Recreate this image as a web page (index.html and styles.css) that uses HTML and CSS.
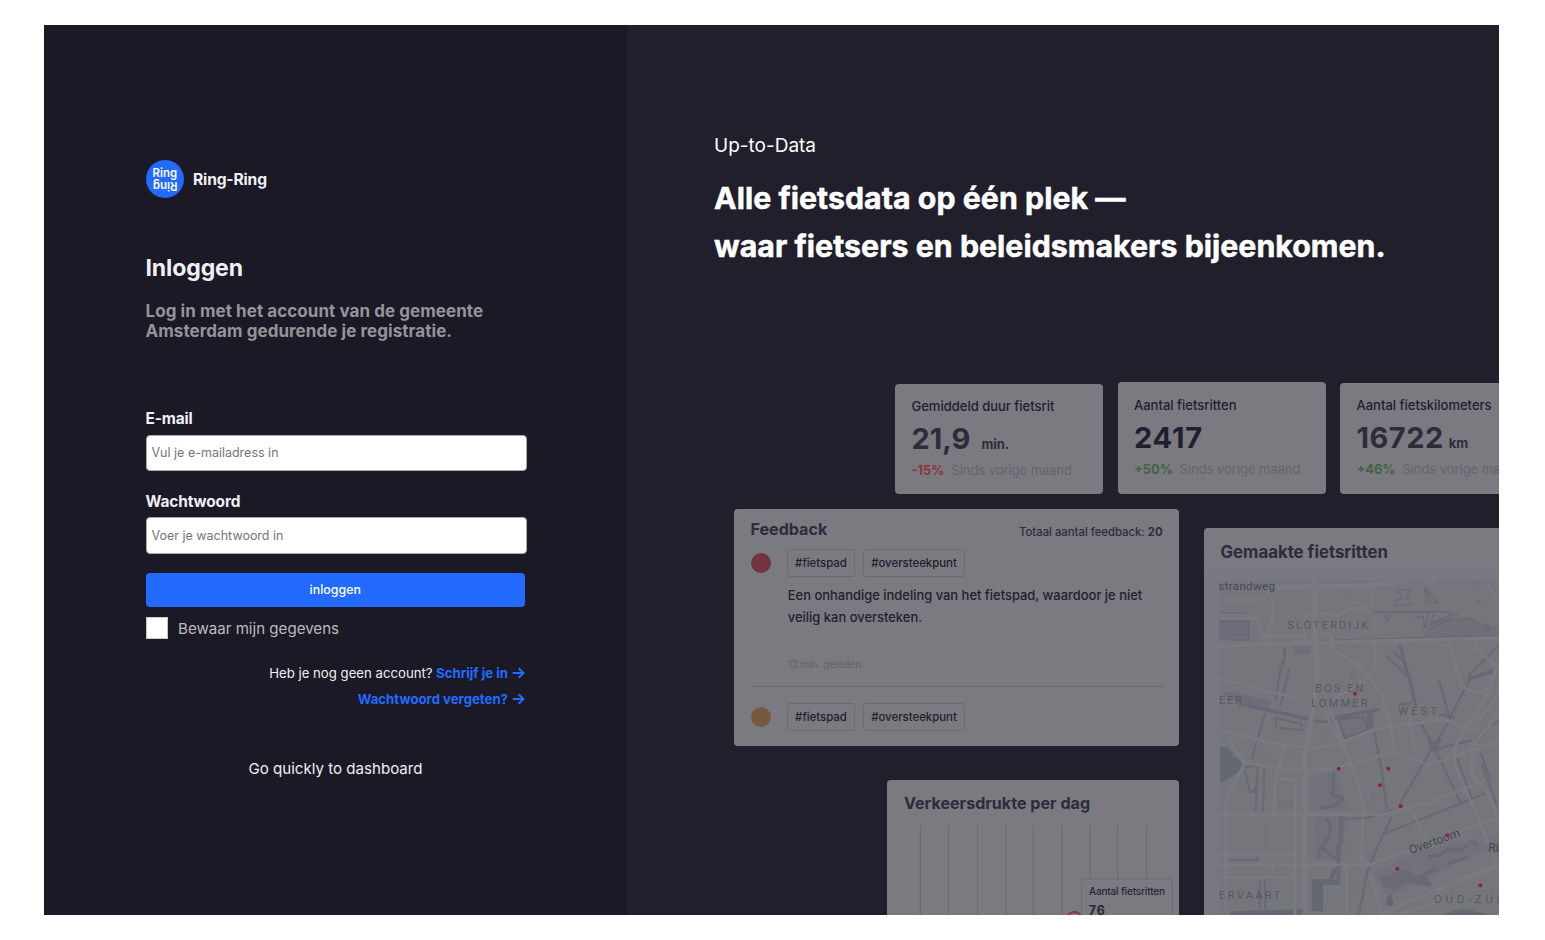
FILE: index.html
```html
<!DOCTYPE html>
<html lang="nl">
<head>
<meta charset="utf-8">
<title>Ring-Ring – Inloggen</title>
<link rel="stylesheet" href="styles.css">
</head>
<body>
<main class="page">
  <section class="login">
    <div class="brand">
      <svg class="logo" viewBox="0 0 38 38">
        <circle cx="19" cy="19" r="19" fill="#236aff"/>
        <g fill="#fff" font-family="Inter, sans-serif" font-size="12" font-weight="600">
          <text x="6.6" y="17.2" textLength="24.5" lengthAdjust="spacingAndGlyphs">Ring</text>
          <text x="6.6" y="17.2" textLength="24.5" lengthAdjust="spacingAndGlyphs" transform="rotate(180 19 19.4)">Ring</text>
        </g>
      </svg>
      <span class="brand-name">Ring-Ring</span>
    </div>
    <h1 class="title">Inloggen</h1>
    <p class="intro">Log in met het account van de gemeente<br>Amsterdam gedurende je registratie.</p>
    <form class="form">
      <label class="label" for="email">E-mail</label>
      <input class="input" id="email" type="text" placeholder="Vul je e-mailadress in">
      <label class="label second" for="pass">Wachtwoord</label>
      <input class="input" id="pass" type="password" placeholder="Voer je wachtwoord in">
      <button class="submit" type="button">inloggen</button>
      <label class="remember"><span class="box"></span><span class="remember-text">Bewaar mijn gegevens</span></label>
    </form>
    <div class="links">
      <div class="link-row"><span class="ask">Heb je nog geen account?</span><a class="link signup">Schrijf je in</a><svg class="arrow" viewBox="0 0 13 12"><path d="M.7 6H11.5M6.7 1.2 11.5 6 6.7 10.8"/></svg></div>
      <div class="link-row"><a class="link forgot">Wachtwoord vergeten?</a><svg class="arrow" viewBox="0 0 13 12"><path d="M.7 6H11.5M6.7 1.2 11.5 6 6.7 10.8"/></svg></div>
    </div>
    <a class="quick">Go quickly to dashboard</a>
  </section>

  <section class="promo">
    <header class="headline">
      <p class="kicker">Up-to-Data</p>
      <h2 class="slogan">Alle fietsdata op één plek —<br>waar fietsers en beleidsmakers bijeenkomen.</h2>
    </header>
    <div class="stats">
      <article class="card stat first">
        <p class="stat-label">Gemiddeld duur fietsrit</p>
        <p class="stat-value">21,9<small class="wide">min.</small></p>
        <p class="stat-trend"><b class="down">-15%</b><span>Sinds vorige maand</span></p>
      </article>
      <article class="card stat mid">
        <p class="stat-label">Aantal fietsritten</p>
        <p class="stat-value dark">2417</p>
        <p class="stat-trend"><b class="up">+50%</b><span>Sinds vorige maand</span></p>
      </article>
      <article class="card stat last">
        <p class="stat-label">Aantal fietskilometers</p>
        <p class="stat-value distance">16722<small>km</small></p>
        <p class="stat-trend"><b class="up">+46%</b><span>Sinds vorige maand</span></p>
      </article>
    </div>
    <div class="boards">
      <div class="column">
        <article class="card feedback">
          <div class="fb-head"><h3 class="card-title">Feedback</h3><span class="total">Totaal aantal feedback: <b>20</b></span></div>
          <div class="fb-tags"><i class="dot red"></i><span class="tag t1">#fietspad</span><span class="tag t2">#oversteekpunt</span></div>
          <p class="fb-text">Een onhandige indeling van het fietspad, waardoor je niet<br>veilig kan oversteken.</p>
          <p class="fb-time">12 min. geleden</p>
          <hr class="rule">
          <div class="fb-tags"><i class="dot orange"></i><span class="tag t1">#fietspad</span><span class="tag t2">#oversteekpunt</span></div>
        </article>
        <article class="card traffic">
          <h3 class="card-title">Verkeersdrukte per dag</h3>
          <svg class="chart" viewBox="887 825 292 90">
            <path d="M920.3 825v90M948.6 825v90M977.5 825v90M1006.2 825v90M1033.4 825v90M1062 825v90M1090 825v90M1117.7 825v90M1146.6 825v90" stroke="#696a72" fill="none"/>
            <circle cx="1074.5" cy="919.5" r="7.5" fill="none" stroke="#972f40" stroke-width="1.8"/>
            <rect x="1081.5" y="879" width="91" height="60" rx="3" fill="#7a7a80" stroke="#6a6b73"/>
            <g font-family="Inter, sans-serif" fill="#27263a">
              <text x="1089" y="895" font-size="10" font-weight="500" textLength="76">Aantal fietsritten</text>
              <text x="1088.8" y="914.8" font-size="12.5" font-weight="700" textLength="16">76</text>
            </g>
          </svg>
        </article>
      </div>
      <article class="card rides">
        <h3 class="card-title">Gemaakte fietsritten</h3>
        <svg class="map" viewBox="72 180 840 1005">
          <rect x="72" y="180" width="840" height="1005" fill="#75767c"/>
          <!-- waterways and parks, northern half -->
          <g fill="none" stroke="#686974" stroke-width="5">
            <path d="M72 303H162V360H72Z" fill="#6d6e79" stroke="none"/>
            <path d="M72 303H162V360H112" stroke-width="4"/>
            <path d="M72 278H152" stroke-width="4"/>
            <path d="M536 276H690L740 274 790 286M565 280 577 302 585 284M657 294 686 290V324L752 296M700 280 690 320M716 282 708 310 770 284" stroke-width="4"/>
            <path d="M690 335 760 296 830 297 912 325V350L690 352Z" fill="#6f707a" stroke="none"/>
            <path d="M780 300 830 294 850 308M700 330 775 290M868 322 884 322 876 332Z"/>
            <path d="M370 362 560 356 690 352 912 346" stroke-width="4"/>
            <path d="M600 240 620 238 612 210 650 212 634 230 648 254 602 256ZM688 204 730 248 694 252ZM694 214 708 250" stroke-width="3.5"/>
            <path d="M268 384V414L260 438" stroke-width="9"/>
            <path d="M258 440 240 545M282 446 256 560" stroke-width="6"/>
            <path d="M298 378H348V404H298Z" fill="#6e6f79" stroke="none"/>
            <path d="M615 374 628 430 645 480 662 560" stroke-width="10"/>
            <path d="M572 406 642 474M596 398 636 432" stroke-width="6"/>
            <path d="M732 480 764 594 820 485M820 485 825 462 912 376" stroke-width="7"/>
            <path d="M820 478 895 452" stroke-width="11"/>
            <path d="M732 582 780 594 M610 554 650 550" stroke-width="7"/>
            <path d="M72 515 130 520 230 545 215 570 140 553" fill="#6c6d78" stroke="none"/>
            <path d="M130 553 350 598" stroke-width="9"/>
            <path d="M420 592 554 568M525 570 530 600" stroke-width="9"/>
            <path d="M470 452V470M840 186V198M843 248 860 242" stroke-width="8" opacity=".5"/>
          </g>
          <g transform="translate(0 570)">
            <g fill="#70717b">
              <path d="M346 210 400 185 425 190 455 300H345ZM355 314H455V330L436 450H358Z"/>
              <path d="M530 490 690 420 850 385 880 412 700 505 580 560Z"/>
              <path d="M432 28 505 20 520 60 450 84Z" stroke="#666772" stroke-width="6"/>
              <path d="M880 385 912 375V430L885 425Z"/>
            </g>
            <g fill="#656872">
              <path d="M76 112 95 110 142 160 145 175 76 222ZM350 508H436V524H384V604H350ZM106 604 330 598V615H106ZM740 615 800 596 870 610V615Z"/>
              <path d="M556 500 640 478 660 500 720 470 735 480 690 496 715 530 635 520 600 540 562 528Z" fill="#696a76"/>
              <path d="M584 550Q606 584 584 590 564 584 584 550" fill="#656672"/>
            </g>
            <g fill="none" stroke="#686974" stroke-width="6">
              <path d="M150 -17 350 30Q395 43 430 23L550 -2" stroke-width="9"/>
              <path d="M210 8 170 148M188 166 182 305M208 166 204 305M150 170 180 168 M150 180 165 245H180V228"/>
              <path d="M242 20V50M250 54 320 60V42L245 24"/>
              <path d="M525 10V55" stroke-width="20"/>
              <path d="M538 66 560 180 576 300" stroke-width="7"/>
              <path d="M762 32 716 110 672 30M716 110 800 285M716 120 830 90M716 105 610 290M450 328 520 322 600 300M590 320 525 460M520 470 492 612" stroke-width="7"/>
              <path d="M700 84 718 115 736 84" stroke-width="14"/>
              <path d="M570 370 700 320 870 250M780 128 832 268M826 110 868 72M858 130 885 205M860 160 905 285M868 52 912 35"/>
              <path d="M415 185V240Q400 260 432 260T410 292H380V300M392 326Q420 360 395 390T372 440M375 408 420 445" stroke-width="9"/>
              <path d="M438 318V400M430 400V515M420 475 408 510" stroke-width="13"/>
              <path d="M100 450H188V436M194 510V598M210 510V598"/>
              <path d="M700 440 735 435 760 418 800 420 830 396 850 405M760 462 820 440" stroke-width="9"/>
            </g>
            <g fill="#707179"><path d="M208 355H219V410H208ZM248 270H262V294H248ZM266 268H280V292H266ZM284 268H298V292H284ZM528 245H540V280H528ZM374 72H388V84H374Z"/></g>
          </g>
          <!-- streets -->
          <g fill="none" stroke="#7a7b81" stroke-width="8">
            <path d="M240 202 530 196 640 182M360 180V370Q372 420 364 510L330 700V1185" stroke-width="14"/>
            <path d="M72 378 360 368 912 354" stroke-width="11"/>
            <path d="M72 240H200L232 210M232 225 236 280 210 366M72 295H190L200 348H330V290L365 278 430 286 470 266 530 262 536 190M298 350V364"/>
            <path d="M378 340 408 350 418 390 480 430 520 470 560 520 580 600M540 362V440L510 482 410 540M72 475 200 510 350 545M762 364 800 500 850 520 880 505M842 360V385L905 440 880 515 840 600M912 430V520L850 600M880 190 912 250M720 184 700 190M385 570 480 750M580 580 600 694"/>
            <path d="M540 284 536 320 560 350H600" stroke-width="4"/>
            <path d="M72 630 230 668Q350 695 430 670L540 628 740 598 845 632" stroke-width="9"/>
            <path d="M150 728 270 750 400 750 600 695 700 735 912 665M95 650 150 728 92 840V1185M300 880V1185M72 884H560L700 850 870 780M405 570 490 790 505 860 500 1020 525 1034 912 892M72 1034H525M72 1004H300M72 1072H300M455 1034V1185M235 1034 230 1070M270 680 240 780 238 884M245 774 300 780V880"/>
            <path d="M850 570 780 680V740L840 870 912 1050M912 580 830 680V760L880 820 912 900M525 1060 560 1185M560 1185 700 1120 912 1030M650 870 696 964M640 570 658 690"/>
            <path d="M720 1130 740 1100 912 1040M600 1185 730 1145"/>
          </g>
          <g fill="none" stroke="#787980" stroke-width="3" opacity=".8">
            <path d="M100 410H340M120 440 230 470M400 440 510 450M420 210V250M470 205V250M300 215V260M330 215V250M395 390V480M560 400 570 460M690 390 720 560M740 380 790 560M110 710H310M110 930H310M110 960H310M130 1130H300M470 900V1010M480 1080V1180M560 700 590 840M610 700 650 820M640 860 740 830M740 900 830 980M620 960 820 880M590 1160 880 1060M780 610 730 680M480 800 560 780M120 860H280"/>
          </g>
          <g font-family="Roboto, sans-serif" font-size="34" fill="#575861">
            <text x="70" y="209" textLength="170" font-size="35" fill="#484954">strandweg</text>
            <text x="277" y="327" textLength="243">SLOTERDIJK</text>
            <text x="360" y="517" textLength="145">BOS EN</text>
            <text x="348" y="560" textLength="170">LOMMER</text>
            <text x="610" y="584" textLength="116">WEST</text>
            <text x="72" y="553" textLength="69">EER</text>
            <text x="72" y="1136" textLength="184">ERVAART</text>
            <text x="717" y="1149" textLength="197">OUD-ZUI</text>
            <text x="647" y="1003" font-size="36" textLength="160" transform="rotate(-20 647 1003)" fill="#444550">Overtoom</text>
            <text x="880" y="996" font-size="36" fill="#444550">Ri</text>
          </g>
          <g fill="#8b2737">
            <circle cx="480" cy="521" r="6"/><circle cx="431" cy="746" r="6"/><circle cx="580" cy="746" r="6"/><circle cx="555" cy="796" r="6"/><circle cx="617" cy="859" r="6"/><circle cx="757" cy="946" r="6"/><circle cx="607" cy="1046" r="6"/><circle cx="856" cy="1096" r="6"/>
          </g>
        </svg>
      </article>
    </div>
  </section>
</main>
</body>
</html>
```
FILE: styles.css
```css
* { box-sizing: border-box; }
body { margin: 0; padding: 25px 46px 25px 44px; background: #fff; font-family: Inter, "Liberation Sans", sans-serif; }
p, h1, h2, h3 { margin: 0; }
.page { display: grid; grid-template-columns: 583px 872px; height: 890px; overflow: hidden; }
.login { background: #1a1925; color: #f0f0f2; padding: 135px 0 0 101.5px; }
.brand { display: flex; align-items: center; gap: 9.5px; height: 38px; }
.logo { width: 38px; height: 38px; }
.brand-name { font-size: 15.6px; font-weight: 700; letter-spacing: -.17px; }
.title { margin-top: 54px; font-size: 23px; line-height: 32px; font-weight: 700; letter-spacing: -.1px; }
.intro { margin-top: 17px; font-size: 17px; line-height: 20px; font-weight: 700; letter-spacing: .06px; color: #949499; white-space: nowrap; }
.form { display: flex; flex-direction: column; align-items: flex-start; margin-top: 68px; }
.label { font-size: 15.4px; line-height: 20px; font-weight: 700; letter-spacing: -.12px; }
.label.second { margin-top: 20.5px; }
.input { width: 381px; height: 36.5px; margin-top: 5.5px; padding: 0 5px; border: 1px solid #a9a9ae; border-radius: 4px; background: #fff; font: 400 12.5px Inter, sans-serif; }
.input::placeholder { color: #757575; }
.submit { width: 379.5px; height: 34.5px; margin-top: 19px; border: 0; border-radius: 4px; background: #236aff; color: #fff; font: 500 12.4px Inter, sans-serif; }
.remember { display: flex; align-items: center; gap: 10px; margin-top: 9px; height: 24px; font-size: 15.1px; color: #bcbcbf; }
.box { width: 22.5px; height: 22.5px; background: #fff; border: 1px solid #c8c8c8; }
.links { width: 379.5px; margin-top: 20.5px; }
.link-row { display: flex; justify-content: flex-end; align-items: center; height: 25.5px; font-size: 13.2px; white-space: nowrap; }
.link { color: #236aff; font-weight: 700; }
.signup { margin-left: 3.5px; }
.arrow { width: 13px; height: 12px; margin-left: 4px; fill: none; stroke: #236aff; stroke-width: 2; }
.quick { display: block; width: 380px; margin-top: 46.5px; text-align: center; font-size: 15.1px; line-height: 22px; }
.promo { background: #201f2b; overflow: hidden; }
.headline { height: 357px; padding: 108px 0 0 87px; color: #fff; white-space: nowrap; }
.kicker { font-size: 19px; line-height: 25px; }
.slogan { margin-top: 17px; font-size: 30.3px; line-height: 47.5px; font-weight: 700; letter-spacing: .03px; -webkit-text-stroke: .5px #fff; }
.card { background: #7a7a80; border-radius: 4px; color: #2d2c3b; }
.stats { display: flex; align-items: flex-end; gap: 14.5px; height: 112px; padding-left: 268px; }
.stat { flex: none; width: 208px; padding: 14px 16.5px 0; white-space: nowrap; }
.first { height: 110.5px; }
.mid { height: 112.5px; padding-top: 15px; }
.last { height: 111.5px; }
.stat-label { font-size: 13px; line-height: 16px; font-weight: 500; color: #201f2f; }
.stat-value { height: 35px; margin-top: 5px; font-size: 29px; line-height: 39px; font-weight: 700; }
.stat-value.dark { color: #201f2f; letter-spacing: .8px; }
.stat-value.distance { letter-spacing: .5px; }
.stat-value small { margin-left: 5px; font-size: 13px; font-weight: 700; letter-spacing: 0; }
.stat-value small.wide { margin-left: 11px; }
.stat-trend { display: flex; gap: 7px; margin-top: 9.5px; font-size: 12.9px; line-height: 16px; color: #65656e; }
.down { color: #8e3441; }
.up { color: #416249; }
.boards { display: flex; gap: 25px; padding: 15px 0 0 107px; }
.column { flex: none; display: flex; flex-direction: column; align-items: flex-end; gap: 34.5px; width: 445px; }
.card-title { font-size: 16.1px; line-height: 22px; font-weight: 700; }
.feedback { width: 445px; height: 236.5px; padding: 8.5px 16.5px 0; }
.fb-head { display: flex; justify-content: space-between; align-items: flex-start; height: 31.5px; }
.total { margin-top: 4px; font-size: 11.3px; line-height: 20px; font-weight: 500; }
.fb-tags { display: flex; align-items: center; height: 27.5px; }
.dot { width: 20px; height: 20px; margin-right: 16.5px; border-radius: 50%; }
.red { background: #74343f; }
.orange { background: #77593f; }
.tag { height: 27.5px; border: 1px solid #6b6c72; border-radius: 3px; font-size: 11.4px; line-height: 26px; font-weight: 500; text-align: center; color: #201f2f; }
.t1 { width: 68px; margin-right: 8px; }
.t2 { width: 102px; }
.fb-text { margin: 7.5px 0 0 37.3px; font-size: 12.95px; line-height: 22px; font-weight: 500; color: #201f2f; white-space: nowrap; }
.fb-time { margin: 27.5px 0 0 37.3px; font-size: 9.9px; line-height: 16px; font-weight: 500; color: #65656c; }
.rule { height: 1px; margin: 14px 0 16.5px; border: 0; background: #686970; }
.traffic { width: 292px; height: 135px; padding-top: 11.5px; overflow: hidden; border-radius: 4px 4px 0 0; }
.traffic .card-title { margin-left: 17px; }
.chart { display: block; width: 292px; height: 90px; margin-top: 11.5px; }
.rides { flex: none; width: 296px; height: 387px; margin-top: 19px; padding-top: 12.5px; border-radius: 4px 0 0 0; background: linear-gradient(#7a7a80 25px, #787883 60px); }
.rides .card-title { margin-left: 16.5px; font-size: 16.8px; }
.map { display: block; width: 280px; height: 335px; margin: 17.5px 0 0 15px; }
```
